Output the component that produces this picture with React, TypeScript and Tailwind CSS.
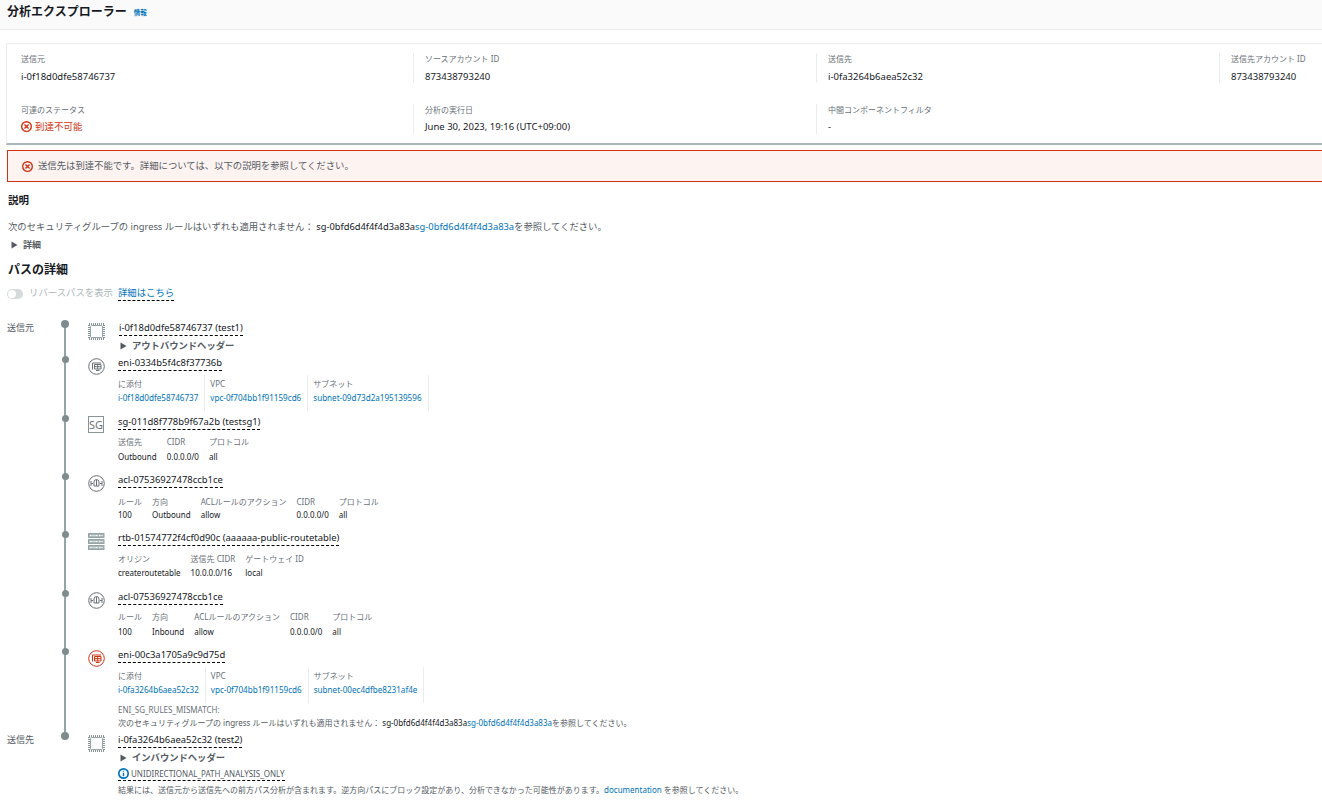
import { Fragment } from "react";
import type { ReactNode } from "react";

const Chip = () => (
  <svg width="17" height="17" viewBox="0 0 17 17" fill="none">
    <rect x="1" y="1" width="15" height="15" stroke="#879596" strokeWidth="2" strokeDasharray="1 1" />
    <rect x="2.5" y="2.5" width="12" height="12" rx="1" fill="#ffffff" stroke="#95a5a6" strokeWidth="1" />
  </svg>
);

const Eni = ({ color = "#687078" }: { color?: string }) => (
  <svg width="17" height="17" viewBox="0 0 17 17" fill="none" stroke={color} strokeWidth="1">
    <circle cx="8.5" cy="8.5" r="7.8" />
    <path d="M4.5 5h8.5M4.5 5v6.5M6.5 6.5h6.5v4.5H6.5zM8 12.5h3.5M6.5 8.7h6.5M9.7 6.5v4.5" />
  </svg>
);

const Acl = () => (
  <svg width="17" height="17" viewBox="0 0 17 17" fill="none" stroke="#687078" strokeWidth="1">
    <circle cx="8.5" cy="8.5" r="7.8" />
    <path d="M3 6v5M14 6v5M3 8.5h2M12 8.5h2M6 7v4h5V7a2.5 2.5 0 0 0-5 0zM8.5 5v6" />
  </svg>
);

const RouteTable = () => (
  <svg width="17" height="17" viewBox="0 0 17 17" fill="none" stroke="#95a5a6" strokeWidth="1">
    <rect x="0.5" y="0.5" width="15.5" height="4" fill="#aab7b8" />
    <rect x="0.5" y="6.5" width="15.5" height="4" fill="#aab7b8" />
    <rect x="0.5" y="12.5" width="15.5" height="4" fill="#aab7b8" />
    <path d="M2 2.5h3.5M6.5 2.5h3.5M11 2.5h3.5M2 8.5h3.5M6.5 8.5h3.5M11 8.5h3.5M2 14.5h3.5M6.5 14.5h3.5M11 14.5h3.5" stroke="#ffffff" strokeDasharray="1 0.5" />
  </svg>
);

const SgIcon = () => (
  <div className="w-[16px] h-[17px] -mt-[1px] border border-[#879596] text-[11px] leading-[15px] text-center text-[#687078]">SG</div>
);

const ErrorIcon = () => (
  <svg width="11" height="11" viewBox="0 0 16 16" fill="none" stroke="#d13212" strokeWidth="2" className="shrink-0">
    <circle cx="8" cy="8" r="7" />
    <path d="M5 5l6 6M11 5l-6 6" />
  </svg>
);

const Arrow = () => (
  <svg width="7" height="8" viewBox="0 0 7 8" className="shrink-0">
    <path d="M0.5 0.5L6.5 4L0.5 7.5z" fill="#545b64" />
  </svg>
);

const Title = ({ children }: { children: ReactNode }) => (
  <div className="w-max h-[15px] leading-[13px] text-[9.45px] text-[#16191f] border-b border-dashed border-black">
    {children}
  </div>
);

const Header = ({ children }: { children: ReactNode }) => (
  <div className="flex items-center gap-[5px] pl-[2px] text-[9.3px] font-bold leading-[13px] text-[#545b64]">
    <Arrow />
    {children}
  </div>
);

const Link = ({ children }: { children: ReactNode }) => <span className="text-[#0073bb]">{children}</span>;

// plain table: label row + value row, columns sized by their content
const Plain = ({ cols, className }: { cols: string[][]; className: string }) => (
  <div className={`grid grid-flow-col grid-rows-2 w-max gap-x-[10px] ${className}`}>
    {cols.map((c) => (
      <Fragment key={c[0]}>
        <div className="text-[8px] text-[#687078] leading-[13px]">{c[0]}</div>
        <div className="text-[8px] text-[#16191f] leading-[13px]">{c[1]}</div>
      </Fragment>
    ))}
  </div>
);

// eni table with dividers between the cells
const Attached = ({ cols }: { cols: string[][] }) => (
  <div className="flex mt-[4px] h-9">
    {cols.map((c, i) => (
      <div key={c[0]} className={`h-full border-r border-[#eaeded] pr-[6px] ${i > 0 ? "pl-[5px]" : ""}`}>
        <div className="mt-[2px] text-[8px] leading-[13px] text-[#687078]">{c[0]}</div>
        <div className="mt-[1px] text-[8.1px] leading-[13px] text-[#0073bb]">{c[1]}</div>
      </div>
    ))}
  </div>
);

const Step = ({
  label,
  big,
  icon,
  className,
  children,
}: {
  label?: string;
  big?: boolean;
  icon: ReactNode;
  className: string;
  children: ReactNode;
}) => (
  <div className={`flex ${className}`}>
    <div className="w-[54px] shrink-0 text-[9px] leading-[13px] text-[#545b64]">{label}</div>
    <div className="w-2 shrink-0 flex justify-center relative z-10">
      <div className={big ? "w-2 h-2 -mt-[1px] rounded-full bg-[#7f8c8d]" : "w-[7px] h-[7px] rounded-full bg-[#7f8c8d]"} />
    </div>
    <div className="w-[49px] shrink-0 pl-[19px] pt-[2px]">{icon}</div>
    <div className="min-w-0">{children}</div>
  </div>
);

const Field = ({ label, children, first, tight }: { label: string; children: ReactNode; first?: boolean; tight?: boolean }) => (
  <div className={`w-[403px] shrink-0 h-[30px] pl-[11px] ${first ? "" : "border-l border-[#eaeded]"}`}>
    <div className="text-[8px] leading-[11px] text-[#687078]">{label}</div>
    <div className={`${tight ? "mt-[5px]" : "mt-[6px]"} text-[9.5px] leading-[13px] text-[#16191f] whitespace-nowrap`}>{children}</div>
  </div>
);

export default function App() {
  return (
    <div
      className="w-[1322px] h-[806px] overflow-hidden bg-white"
      style={{ fontFamily: '"Noto Sans", "Noto Sans CJK JP", sans-serif' }}
    >
      <div className="h-[30px] bg-[#fafafa] border-b border-[#eaeded] pl-[7px] pt-[3px] flex items-start gap-[7px]">
        <h1 className="text-[12px] leading-[17px] font-bold text-[#16191f]">分析エクスプローラー</h1>
        <span className="mt-[6px] text-[6.5px] leading-[8px] font-bold text-[#0073bb]">情報</span>
      </div>

      <div className="ml-[6px] mt-[13px] w-[1400px] h-[102px] border-t border-[#eaeded] border-l border-b-2 border-b-[#aab7b8] pt-[9px] pl-[3px]">
        <div className="flex">
          <Field first label="送信元">i-0f18d0dfe58746737</Field>
          <Field label="ソースアカウント ID">873438793240</Field>
          <Field label="送信先">i-0fa3264b6aea52c32</Field>
          <Field label="送信先アカウント ID">873438793240</Field>
        </div>
        <div className="flex mt-[21px]">
          <Field first tight label="可達のステータス">
            <span className="flex items-center gap-[3px] text-[#d13212]">
              <ErrorIcon />
              到達不可能
            </span>
          </Field>
          <Field tight label="分析の実行日">June 30, 2023, 19:16 (UTC+09:00)</Field>
          <Field tight label="中間コンポーネントフィルタ">-</Field>
        </div>
      </div>

      <div className="ml-[7px] mt-[5px] w-[1400px] h-[32px] bg-[#fdf3f1] border border-[#d13212] flex items-center gap-[5px] pl-[14px] text-[9.35px] text-[#545b64]">
        <ErrorIcon />
        送信先は到達不能です。詳細については、以下の説明を参照してください。
      </div>

      <div className="pl-[8px]">
        <h2 className="mt-[11px] text-[10.5px] leading-[14px] font-bold text-[#16191f]">説明</h2>
        <p className="mt-[13px] text-[9.33px] leading-[13px] text-[#545b64]">
          次のセキュリティグループの ingress ルールはいずれも適用されません： <span className="text-[#16191f]">sg-0bfd6d4f4f4d3a83a</span>
          <Link>sg-0bfd6d4f4f4d3a83a</Link>を参照してください。
        </p>
        <div className="mt-[5px] flex items-center gap-[5px] pl-[3px] text-[9px] leading-[13px] font-bold text-[#545b64]">
          <Arrow />
          詳細
        </div>
        <h2 className="mt-[10px] text-[12px] leading-[17px] font-bold text-[#16191f]">パスの詳細</h2>
        <div className="mt-[8px] flex items-center h-[15px] text-[9.4px]">
          <div className="w-4 h-[10px] rounded-full bg-[#d5dbdb] flex items-center justify-start pl-[1px] mr-[6px] -ml-[1px]">
            <div className="w-2 h-2 rounded-full bg-white" />
          </div>
          <span className="text-[#aab7b8]">リバースパスを表示</span>
          <span className="ml-[5px] text-[#0073bb] border-b border-dashed border-black leading-[14px]">詳細はこちら</span>
        </div>
      </div>

      <div className="relative mt-[20px] pl-[7px]">
        <div className="absolute left-[64px] top-[4px] w-[2px] h-[412px] bg-[#95a5a6]" />

        <Step big label="送信元" icon={<Chip />} className="h-[35px]">
          <div className="pl-[1px]"><Title>i-0f18d0dfe58746737 (test1)</Title></div>
          <div className="mt-[3px]"><Header>アウトバウンドヘッダー</Header></div>
        </Step>

        <Step icon={<Eni />} className="h-[59px]">
          <Title>eni-0334b5f4c8f37736b</Title>
          <Attached cols={[["に添付", "i-0f18d0dfe58746737"], ["VPC", "vpc-0f704bb1f91159cd6"], ["サブネット", "subnet-09d73d2a195139596"]]} />
        </Step>

        <Step icon={<SgIcon />} className="h-[58px]">
          <Title>sg-011d8f778b9f67a2b (testsg1)</Title>
          <Plain className="mt-[5px] gap-y-[2px]" cols={[["送信先", "Outbound"], ["CIDR", "0.0.0.0/0"], ["プロトコル", "all"]]} />
        </Step>

        <Step icon={<Acl />} className="h-[58px]">
          <Title>acl-07536927478ccb1ce</Title>
          <Plain className="mt-[7px]" cols={[["ルール", "100"], ["方向", "Outbound"], ["ACLルールのアクション", "allow"], ["CIDR", "0.0.0.0/0"], ["プロトコル", "all"]]} />
        </Step>

        <Step icon={<RouteTable />} className="h-[59px]">
          <Title>rtb-01574772f4cf0d90c (aaaaaa-public-routetable)</Title>
          <Plain className="mt-[6px] gap-y-[1px]" cols={[["オリジン", "createroutetable"], ["送信先 CIDR", "10.0.0.0/16"], ["ゲートウェイ ID", "local"]]} />
        </Step>

        <Step icon={<Acl />} className="h-[58px]">
          <Title>acl-07536927478ccb1ce</Title>
          <Plain className="mt-[5px] gap-y-[2px]" cols={[["ルール", "100"], ["方向", "Inbound"], ["ACLルールのアクション", "allow"], ["CIDR", "0.0.0.0/0"], ["プロトコル", "all"]]} />
        </Step>

        <Step icon={<Eni color="#d13212" />} className="h-[85px]">
          <Title>eni-00c3a1705a9c9d75d</Title>
          <Attached cols={[["に添付", "i-0fa3264b6aea52c32"], ["VPC", "vpc-0f704bb1f91159cd6"], ["サブネット", "subnet-00ec4dfbe8231af4e"]]} />
          <div className="text-[8px] leading-[13px] text-[#687078]">ENI_SG_RULES_MISMATCH:</div>
          <div className="text-[8px] leading-[13px] text-[#545b64] whitespace-nowrap">
            次のセキュリティグループの ingress ルールはいずれも適用されません： <span className="text-[#16191f]">sg-0bfd6d4f4f4d3a83a</span>
            <Link>sg-0bfd6d4f4f4d3a83a</Link>を参照してください。
          </div>
        </Step>

        <Step big label="送信先" icon={<Chip />} className="h-[70px]">
          <Title>i-0fa3264b6aea52c32 (test2)</Title>
          <div className="mt-[3px]"><Header>インバウンドヘッダー</Header></div>
          <div className="mt-[3px] w-max flex items-center gap-[2px] text-[8px] leading-[13px] text-[#545b64] border-b border-dashed border-black">
            <svg width="11" height="11" viewBox="0 0 16 16" fill="none" className="shrink-0">
              <circle cx="8" cy="8" r="6.8" stroke="#0073bb" strokeWidth="2.4" />
              <path d="M8 4v1.6M8 7v5" stroke="#0073bb" strokeWidth="2" />
            </svg>
            UNIDIRECTIONAL_PATH_ANALYSIS_ONLY
          </div>
          <div className="mt-[2px] text-[8px] leading-[13px] text-[#545b64] whitespace-nowrap">
            結果には、送信元から送信先への前方パス分析が含まれます。逆方向パスにブロック設定があり、分析できなかった可能性があります。<Link>documentation</Link> を参照してください。
          </div>
        </Step>
      </div>
    </div>
  );
}
